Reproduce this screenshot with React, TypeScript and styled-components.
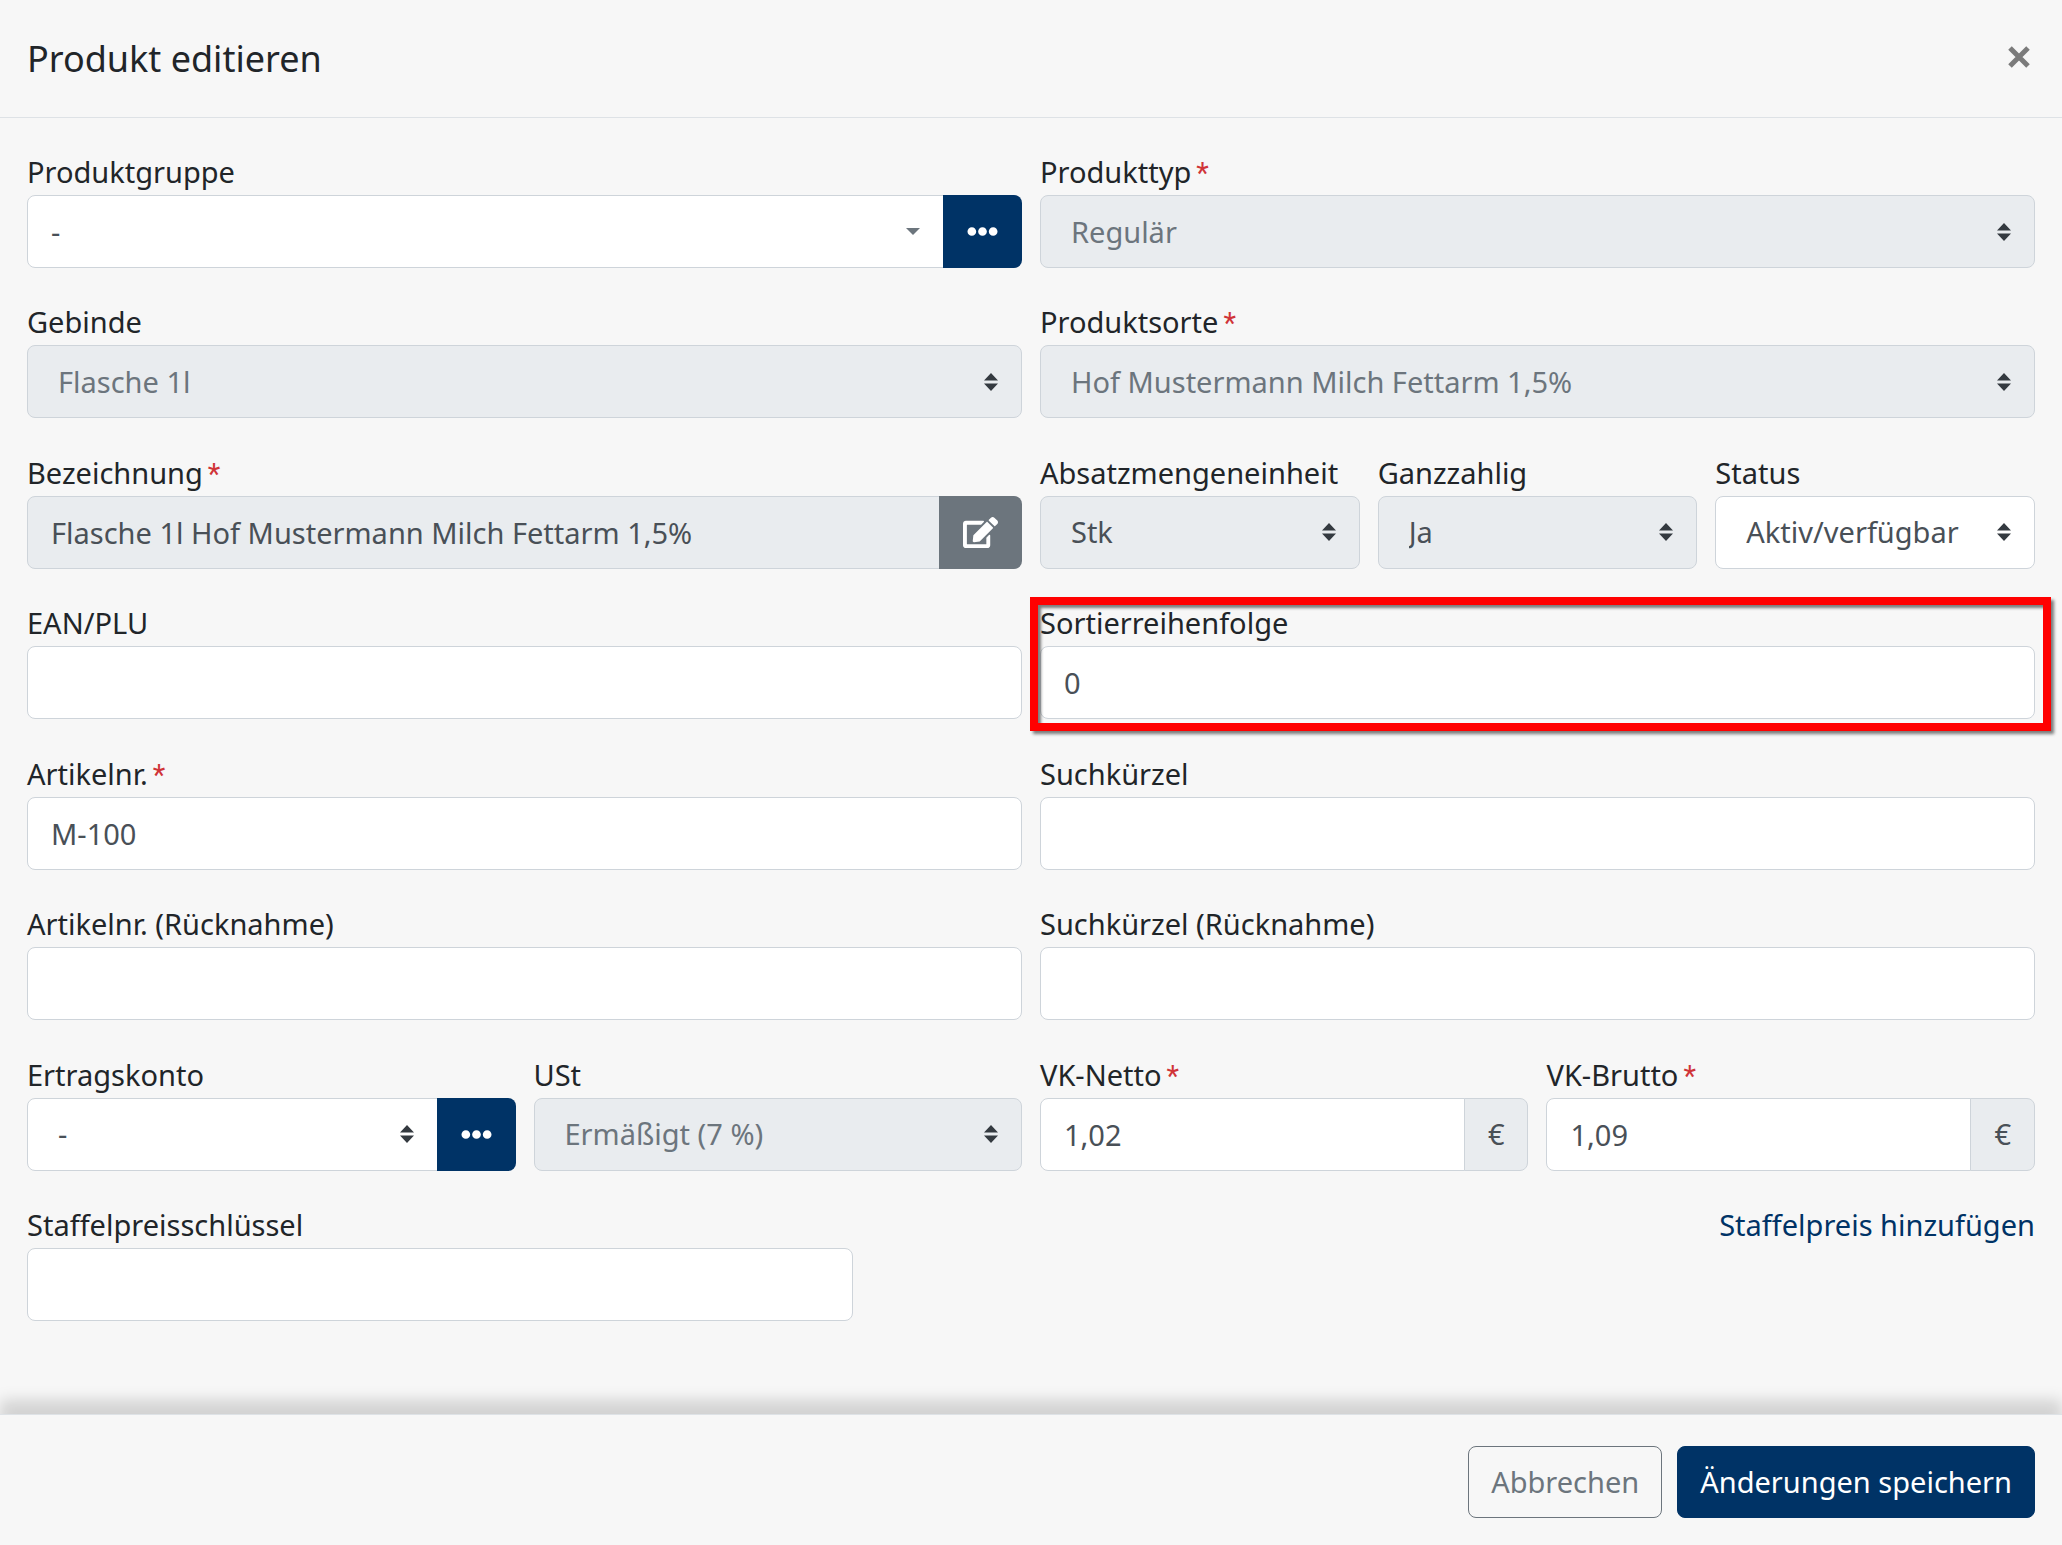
import React from "react";
import styled, { createGlobalStyle, css } from "styled-components";
import { FaEdit, FaEllipsisH } from "react-icons/fa";

const color = {
  page: "#f7f7f7",
  text: "#212529",
  value: "#495057",
  muted: "#6c757d",
  line: "#ced4da",
  rule: "#dee2e6",
  disabled: "#e9ecef",
  primary: "#003366",
  required: "#d03438",
};

const GlobalStyle = createGlobalStyle`
  *, *::before, *::after { box-sizing: border-box; }
  body {
    margin: 0;
    background: ${color.page};
    color: ${color.text};
    font-family: "Segoe UI", "Noto Sans", "Open Sans", sans-serif;
    font-size: 29px;
    line-height: 46px;
  }
  button, input, select { font: inherit; margin: 0; }
`;

const Dialog = styled.div`
  display: flex;
  flex-direction: column;
  min-height: 100vh;
`;

const Header = styled.header`
  display: flex;
  align-items: center;
  justify-content: space-between;
  padding: 30px 27px;
  border-bottom: 1px solid ${color.rule};
`;

const Title = styled.h1`
  margin: 0;
  font-size: 36px;
  font-weight: 400;
  line-height: 57px;
`;

const CloseButton = styled.button`
  display: flex;
  padding: 4px 4px 8px;
  border: 0;
  background: none;
  color: #7b7b7b;
  cursor: pointer;
`;

const Form = styled.form`
  flex: 1;
  display: grid;
  grid-template-columns: repeat(12, minmax(0, 1fr));
  column-gap: 18px;
  row-gap: 30px;
  align-content: space-between;
  padding: 31px 27px 93px;
`;

const FieldBox = styled.div<{ $span: number }>`
  position: relative;
  grid-column: span ${(p) => p.$span};
  display: flex;
  flex-direction: column;
`;

const Label = styled.label`
  height: 46px;
  white-space: nowrap;
`;

const Required = styled.span`
  margin-left: 5px;
  color: ${color.required};
  font-family: Roboto, sans-serif;
`;

const control = css`
  min-width: 0;
  width: 100%;
  height: 73px;
  border: 1px solid ${color.line};
  border-radius: 8px;
  background-color: #fff;
  color: ${color.value};
  opacity: 1;
`;

const Input = styled.input`
  ${control}
  padding: 0 23px;

  &:read-only {
    background-color: ${color.disabled};
  }
`;

const sortArrows = `url("data:image/svg+xml,%3Csvg xmlns='http://www.w3.org/2000/svg' viewBox='0 0 14 18'%3E%3Cpath fill='%23343a40' d='M7 0L0 7.5h14zM7 18L0 10.5h14z'/%3E%3C/svg%3E")`;
const caret = `url("data:image/svg+xml,%3Csvg xmlns='http://www.w3.org/2000/svg' viewBox='0 0 14 7'%3E%3Cpath fill='%236c757d' d='M0 0h14L7 7z'/%3E%3C/svg%3E")`;

const Select = styled.select<{ $caret?: boolean; $strong?: boolean }>`
  ${control}
  appearance: none;
  padding: 0 48px 0 ${(p) => (p.$caret ? 23 : 30)}px;
  background-image: ${(p) => (p.$caret ? caret : sortArrows)};
  background-repeat: no-repeat;
  background-position: right 23px center;
  background-size: 14px ${(p) => (p.$caret ? 7 : 18)}px;

  &:disabled {
    background-color: ${color.disabled};
    color: ${(p) => (p.$strong ? color.value : color.muted)};
  }
`;

const Group = styled.div`
  display: flex;

  > :first-child {
    border-top-right-radius: 0;
    border-bottom-right-radius: 0;
  }
  > :last-child {
    flex: none;
    border-top-left-radius: 0;
    border-bottom-left-radius: 0;
    margin-left: -1px;
  }
`;

const AddonButton = styled.button<{ $tone: "primary" | "secondary" }>`
  z-index: 1;
  display: flex;
  align-items: center;
  padding: 0 24px;
  border: 0;
  border-radius: 8px;
  background: ${(p) => (p.$tone === "primary" ? color.primary : color.muted)};
  color: #fff;
  cursor: pointer;
`;

const Unit = styled.span`
  display: flex;
  align-items: center;
  padding: 0 23px;
  border: 1px solid ${color.line};
  border-radius: 8px;
  background: ${color.disabled};
  color: ${color.value};
`;

const Highlight = styled.div`
  position: absolute;
  inset: -3px -16px -12px -10px;
  border: 8px solid #ff0000;
  box-shadow: 3px 3px 3px rgba(0, 0, 0, 0.5), inset 3px 3px 3px rgba(0, 0, 0, 0.5);
  pointer-events: none;
`;

const LinkCell = styled.div`
  grid-column: span 7;
  text-align: right;
`;

const Link = styled.a`
  color: ${color.primary};
  text-decoration: none;
`;

const Footer = styled.footer`
  display: flex;
  justify-content: flex-end;
  gap: 15px;
  padding: 31px 27px 27px;
  border-top: 1px solid ${color.rule};
  background: ${color.page};
  box-shadow: 0 -14px 14px rgba(0, 0, 0, 0.15);
`;

const Button = styled.button<{ $solid?: boolean }>`
  padding: 12px 22px;
  border: 1px solid ${(p) => (p.$solid ? color.primary : color.muted)};
  border-radius: 8px;
  background: ${(p) => (p.$solid ? color.primary : "transparent")};
  color: ${(p) => (p.$solid ? "#fff" : color.muted)};
  cursor: pointer;
`;

type FieldProps = {
  id: string;
  label: string;
  span: number;
  required?: boolean;
  highlighted?: boolean;
  children: React.ReactNode;
};

function Field({ id, label, span, required, highlighted, children }: FieldProps) {
  return (
    <FieldBox $span={span}>
      <Label htmlFor={id}>
        {label}
        {required && <Required>*</Required>}
      </Label>
      {children}
      {highlighted && <Highlight />}
    </FieldBox>
  );
}

function MoreButton() {
  return (
    <AddonButton type="button" $tone="primary" aria-label="Auswählen">
      <FaEllipsisH size={31} />
    </AddonButton>
  );
}

export default function App() {
  return (
    <Dialog role="dialog" aria-labelledby="dialog-title">
      <GlobalStyle />
      <Header>
        <Title id="dialog-title">Produkt editieren</Title>
        <CloseButton type="button" aria-label="Schließen">
          <svg width="24" height="24" viewBox="0 0 24 24" fill="none" stroke="currentColor" strokeWidth="5">
            <path d="M3 3L21 21M21 3L3 21" />
          </svg>
        </CloseButton>
      </Header>

      <Form id="product-form">
        <Field id="gruppe" label="Produktgruppe" span={6}>
          <Group>
            <Select id="gruppe" $caret>
              <option>-</option>
            </Select>
            <MoreButton />
          </Group>
        </Field>
        <Field id="typ" label="Produkttyp" span={6} required>
          <Select id="typ" disabled>
            <option>Regulär</option>
          </Select>
        </Field>

        <Field id="gebinde" label="Gebinde" span={6}>
          <Select id="gebinde" disabled>
            <option>Flasche 1l</option>
          </Select>
        </Field>
        <Field id="sorte" label="Produktsorte" span={6} required>
          <Select id="sorte" disabled>
            <option>Hof Mustermann Milch Fettarm 1,5%</option>
          </Select>
        </Field>

        <Field id="bezeichnung" label="Bezeichnung" span={6} required>
          <Group>
            <Input id="bezeichnung" readOnly defaultValue="Flasche 1l Hof Mustermann Milch Fettarm 1,5%" />
            <AddonButton type="button" $tone="secondary" aria-label="Bearbeiten">
              <FaEdit size={35} />
            </AddonButton>
          </Group>
        </Field>
        <Field id="einheit" label="Absatzmengeneinheit" span={2}>
          <Select id="einheit" disabled $strong>
            <option>Stk</option>
          </Select>
        </Field>
        <Field id="ganzzahlig" label="Ganzzahlig" span={2}>
          <Select id="ganzzahlig" disabled $strong>
            <option>Ja</option>
          </Select>
        </Field>
        <Field id="status" label="Status" span={2}>
          <Select id="status">
            <option>Aktiv/verfügbar</option>
          </Select>
        </Field>

        <Field id="ean" label="EAN/PLU" span={6}>
          <Input id="ean" />
        </Field>
        <Field id="sortierung" label="Sortierreihenfolge" span={6} highlighted>
          <Input id="sortierung" defaultValue="0" />
        </Field>

        <Field id="artikelnr" label="Artikelnr." span={6} required>
          <Input id="artikelnr" defaultValue="M-100" />
        </Field>
        <Field id="kuerzel" label="Suchkürzel" span={6}>
          <Input id="kuerzel" />
        </Field>

        <Field id="artikelnr-rueck" label="Artikelnr. (Rücknahme)" span={6}>
          <Input id="artikelnr-rueck" />
        </Field>
        <Field id="kuerzel-rueck" label="Suchkürzel (Rücknahme)" span={6}>
          <Input id="kuerzel-rueck" />
        </Field>

        <Field id="konto" label="Ertragskonto" span={3}>
          <Group>
            <Select id="konto">
              <option>-</option>
            </Select>
            <MoreButton />
          </Group>
        </Field>
        <Field id="ust" label="USt" span={3}>
          <Select id="ust" disabled>
            <option>Ermäßigt (7 %)</option>
          </Select>
        </Field>
        <Field id="netto" label="VK-Netto" span={3} required>
          <Group>
            <Input id="netto" defaultValue="1,02" />
            <Unit>€</Unit>
          </Group>
        </Field>
        <Field id="brutto" label="VK-Brutto" span={3} required>
          <Group>
            <Input id="brutto" defaultValue="1,09" />
            <Unit>€</Unit>
          </Group>
        </Field>

        <Field id="staffel" label="Staffelpreisschlüssel" span={5}>
          <Input id="staffel" />
        </Field>
        <LinkCell>
          <Link href="#staffelpreis">Staffelpreis hinzufügen</Link>
        </LinkCell>
      </Form>

      <Footer>
        <Button type="button">Abbrechen</Button>
        <Button type="submit" form="product-form" $solid>
          Änderungen speichern
        </Button>
      </Footer>
    </Dialog>
  );
}
